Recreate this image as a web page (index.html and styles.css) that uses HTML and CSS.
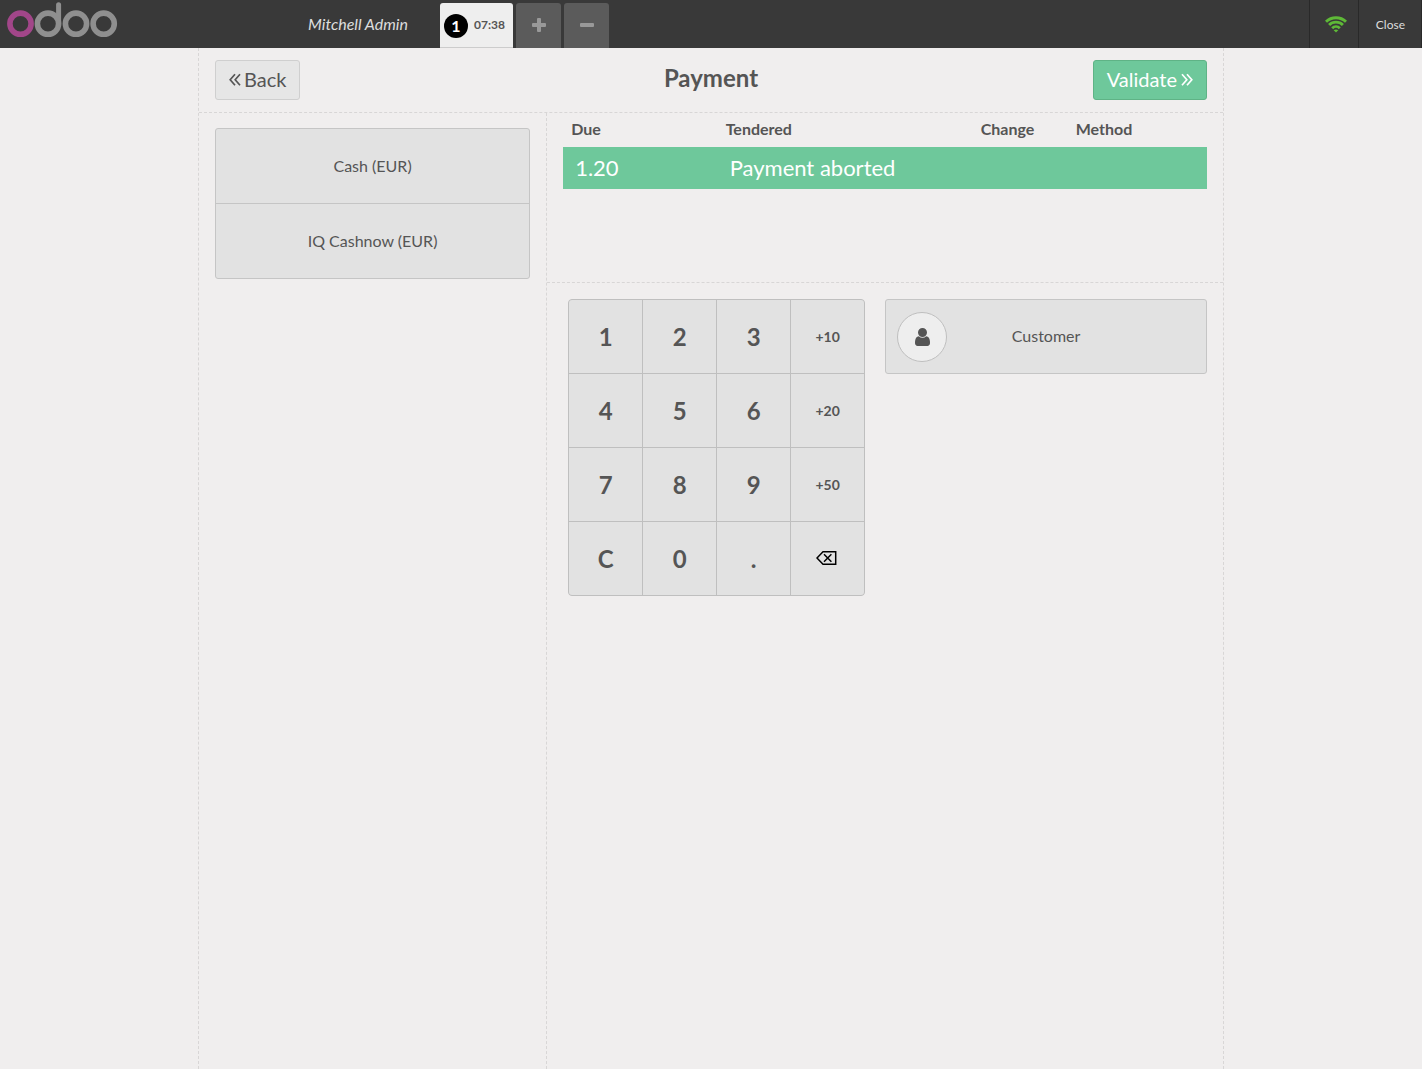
FILE: index.html
```html
<!DOCTYPE html>
<html lang="en">
<head>
<meta charset="utf-8">
<meta name="viewport" content="width=device-width, initial-scale=1">
<title>Payment</title>
<link rel="stylesheet" href="styles.css">
</head>
<body>
<header class="topbar">
  <div class="branding">
    <svg class="logo" viewBox="0 0 112 40" role="img" aria-label="odoo" fill="none" stroke="#8f8f8f" stroke-width="5.6">
      <circle cx="14.5" cy="23.7" r="10.6" stroke="#a24689"/>
      <circle cx="42" cy="23.7" r="10.6"/>
      <path d="M52.6 23.7V4.8" stroke-width="5" stroke-linecap="round"/>
      <circle cx="70" cy="23.7" r="10.6"/>
      <circle cx="97.7" cy="23.7" r="10.6"/>
    </svg>
    <span class="username">Mitchell Admin</span>
  </div>
  <nav class="orders" aria-label="Orders">
    <button type="button" class="order-tab"><span class="order-number">1</span><span class="order-time">07:38</span></button>
    <button type="button" class="order-action" aria-label="New order">
      <svg width="14" height="14" viewBox="0 0 14 14" fill="#999"><rect y="5" width="14" height="4" rx="1"/><rect x="5" width="4" height="14" rx="1"/></svg>
    </button>
    <button type="button" class="order-action" aria-label="Delete order">
      <svg width="14" height="14" viewBox="0 0 14 14" fill="#999"><rect y="5" width="14" height="4" rx="1"/></svg>
    </button>
  </nav>
  <div class="status">
    <button type="button" class="status-button wifi" aria-label="Connected">
      <svg width="22" height="17" viewBox="0 0 22 17" fill="none" stroke="#5eb937" stroke-width="2.9">
        <path d="M1 5.8A14.3 14.3 0 0 1 21 5.8"/>
        <path d="M4.1 9A9.8 9.8 0 0 1 17.9 9"/>
        <path d="M7.2 12.2A5.4 5.4 0 0 1 14.8 12.2"/>
        <path d="M11 16.6L8.7 14.2Q11 12.6 13.3 14.2Z" fill="#5eb937" stroke="none"/>
      </svg>
    </button>
    <button type="button" class="status-button close">Close</button>
  </div>
</header>

<main class="screen">
  <div class="screen-head">
    <button type="button" class="nav-button back">
      <svg width="12" height="16" viewBox="0 -2 12 16" fill="none" stroke="currentColor" stroke-width="1.7"><path d="M6 1.2L1.2 6.7L6 12.2M11 1.2L6.2 6.7L11 12.2"/></svg>
      Back
    </button>
    <h1 class="title">Payment</h1>
    <button type="button" class="nav-button validate">
      Validate
      <svg width="12" height="16" viewBox="0 -2 12 16" fill="none" stroke="currentColor" stroke-width="1.7"><path d="M1 1.2L5.8 6.7L1 12.2M6 1.2L10.8 6.7L6 12.2"/></svg>
    </button>
  </div>
  <div class="panes">
    <section class="methods-pane" aria-label="Payment methods">
      <div class="methods">
        <button type="button" class="method">Cash (EUR)</button>
        <button type="button" class="method">IQ Cashnow (EUR)</button>
      </div>
    </section>
    <section class="payment-pane">
      <div class="lines-area">
        <table class="lines">
          <colgroup><col class="col-due"><col class="col-tendered"><col class="col-change"><col></colgroup>
          <thead><tr><th>Due</th><th>Tendered</th><th>Change</th><th>Method</th></tr></thead>
          <tbody><tr><td>1.20</td><td>Payment aborted</td><td></td><td></td></tr></tbody>
        </table>
      </div>
      <div class="entry">
        <div class="numpad">
          <button type="button" class="key">1</button>
          <button type="button" class="key">2</button>
          <button type="button" class="key">3</button>
          <button type="button" class="key add">+10</button>
          <button type="button" class="key">4</button>
          <button type="button" class="key">5</button>
          <button type="button" class="key">6</button>
          <button type="button" class="key add">+20</button>
          <button type="button" class="key">7</button>
          <button type="button" class="key">8</button>
          <button type="button" class="key">9</button>
          <button type="button" class="key add">+50</button>
          <button type="button" class="key">C</button>
          <button type="button" class="key">0</button>
          <button type="button" class="key">.</button>
          <button type="button" class="key erase" aria-label="Backspace">
            <svg width="21" height="14" viewBox="0 0 21 14" fill="none" stroke="#000" stroke-width="1.5"><path d="M7 .8H19.7V13.2H7L1 7Z"/><path d="M8 3.2L15.4 10.8M15.4 3.2L8 10.8"/></svg>
          </button>
        </div>
        <button type="button" class="customer">
          <span class="avatar">
            <svg width="15" height="18" viewBox="256 128 1280 1536" fill="currentColor"><path d="M1536 1399q0 109-62.5 187t-150.5 78h-854q-88 0-150.5-78t-62.5-187q0-85 8.5-160.5t31.5-152 58.5-131 94-89 134.5-34.5q131 128 313 128t313-128q76 0 134.5 34.5t94 89 58.5 131 31.5 152 8.5 160.5zm-256-887q0 159-112.5 271.5t-271.5 112.5-271.5-112.5-112.5-271.5 112.5-271.5 271.5-112.5 271.5 112.5 112.5 271.5z"/></svg>
          </span>
          <span class="customer-label">Customer</span>
        </button>
      </div>
    </section>
  </div>
</main>
</body>
</html>
```
FILE: styles.css
```css
* { box-sizing: border-box; }

body {
  margin: 0;
  min-height: 100vh;
  display: flex;
  flex-direction: column;
  background: #f0eeee;
  color: #555;
  font: 16px/20px Lato, "Open Sans", sans-serif;
}

button {
  margin: 0;
  padding: 0;
  border: 0;
  background: none;
  color: inherit;
  font: inherit;
  cursor: pointer;
}

svg { display: block; flex: none; }

.topbar {
  display: flex;
  height: 48px;
  background: #393939;
}

.branding {
  flex: 0 0 440px;
  display: flex;
  align-items: center;
  justify-content: space-between;
  padding: 0 32px 0 6px;
}

.logo { width: 112px; height: 40px; align-self: flex-start; }

.username { color: #ddd; font-style: italic; }

.orders {
  display: flex;
  gap: 3px;
  padding-top: 3px;
}

.order-tab {
  width: 73px;
  display: flex;
  align-items: center;
  gap: 6px;
  padding: 2px 0 0 4px;
  border-bottom: 1px solid #ccc;
  border-radius: 3px 3px 0 0;
  background: #eee;
}

.order-number {
  width: 24px;
  border-radius: 50%;
  background: #000;
  color: #fff;
  font-weight: 700;
  line-height: 24px;
}

.order-time { padding-bottom: 2px; font-size: 12px; font-weight: 700; }

.order-action {
  width: 45px;
  display: grid;
  place-items: center;
  padding-bottom: 2px;
  border-radius: 3px 3px 0 0;
  background: #5b5b5b;
}

.status { display: flex; margin-left: auto; border-right: 1px solid #292929; }

.status-button { border-left: 1px solid #292929; }

.wifi { width: 49px; display: grid; place-items: center; padding-left: 4px; }

.close { padding: 2px 16px 0 17px; color: #ddd; font-size: 12px; }

.screen {
  flex: 1;
  width: 100%;
  max-width: 1026px;
  margin: 0 auto;
  display: flex;
  flex-direction: column;
  border: dashed #d8d6d6;
  border-width: 0 1px;
}

.screen-head {
  display: grid;
  grid-template-columns: 1fr auto 1fr;
  padding: 12px 16px;
  border-bottom: 1px dashed #d8d6d6;
}

.title { margin: 0; font-size: 24px; line-height: 36px; }

.nav-button {
  height: 40px;
  display: flex;
  align-items: center;
  gap: 3px;
  padding: 0 13px 2px;
  border: 1px solid #cfcfcf;
  border-radius: 3px;
  background: #e6e6e6;
  font-size: 20px;
}

.back { justify-self: start; }

.validate {
  justify-self: end;
  gap: 4px;
  border-color: #5fb386;
  background: #6ec89b;
  color: #fff;
}

.panes { flex: 1; display: flex; }

.methods-pane { flex: 0 0 calc(34% - 1px); padding: 15px 16px; }

.methods {
  border: 1px solid #c5c5c5;
  border-radius: 3px;
  background: #e2e2e2;
}

.method { display: block; width: 100%; height: 74px; }

.method + .method { height: 75px; border-top: 1px solid #c5c5c5; }

.payment-pane { flex: 1; min-width: 0; border-left: 1px dashed #d8d6d6; }

.lines-area {
  min-height: 170px;
  padding: 0 16px;
  border-bottom: 1px dashed #d8d6d6;
}

.lines { width: 100%; border-collapse: collapse; table-layout: fixed; text-align: left; }

.col-due { width: 24%; }
.col-tendered { width: 255px; }
.col-change { width: 95px; }

.lines th { height: 34px; padding: 0 8px 2px; }

.lines td {
  height: 42px;
  padding: 0 12px;
  background: #6ec89b;
  color: #fff;
  font-size: 22px;
}

.entry {
  display: flex;
  align-items: flex-start;
  gap: 20px;
  padding: 16px 16px 16px 21px;
}

.numpad {
  display: grid;
  grid-template-columns: repeat(4, 73px);
  grid-auto-rows: 73px;
  gap: 1px;
  overflow: hidden;
  border: 1px solid #bfbfbf;
  border-radius: 4px;
  background: #bfbfbf;
}

.key { background: #e2e2e2; font-size: 24px; font-weight: 700; }

.add { font-size: 14px; }

.erase { display: grid; place-items: center; padding: 0 2px 2px 0; }

.customer {
  flex: 1;
  height: 75px;
  display: flex;
  align-items: center;
  padding: 0 11px;
  border: 1px solid #c5c5c5;
  border-radius: 3px;
  background: #e2e2e2;
}

.avatar {
  width: 50px;
  height: 50px;
  display: grid;
  place-items: center;
  border: 1px solid #bfbfbf;
  border-radius: 50%;
  background: #eee;
}

.customer-label { flex: 1; padding: 0 50px 2px 0; }
```
